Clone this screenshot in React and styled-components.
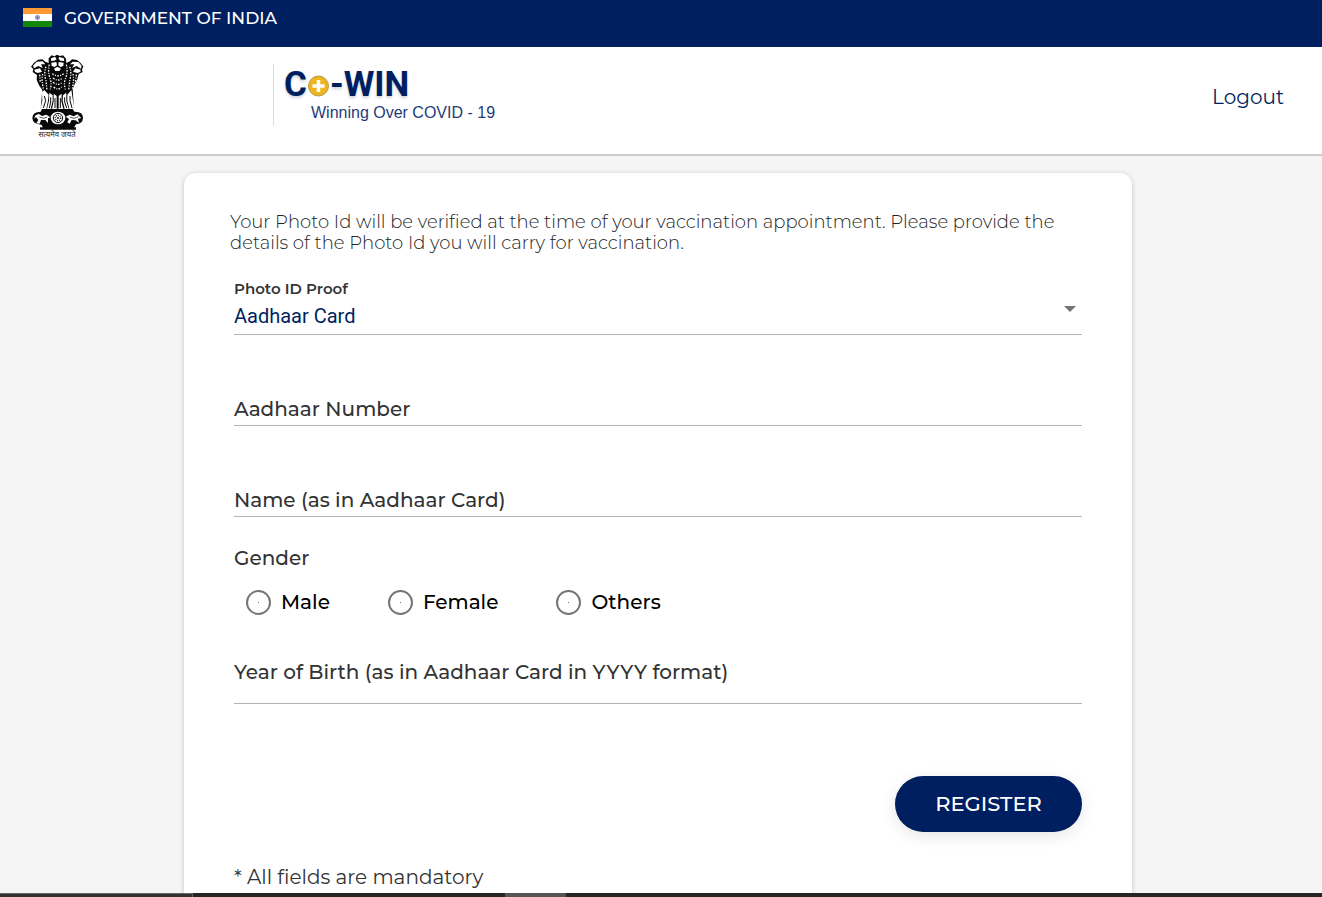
import React from 'react';
import styled, { createGlobalStyle, ThemeProvider } from 'styled-components';

const theme = {
  navy: '#001f60',
  tagline: '#263a78',
  page: '#f5f5f5',
  text: '#333',
  line: '#b4b4b4',
  gray: '#757575',
  font: "Montserrat, Inter, sans-serif"
};

const genders = ['Male', 'Female', 'Others'];
const idProofs = ['Aadhaar Card', 'Driving License', 'PAN Card', 'Passport'];

const GlobalStyle = createGlobalStyle`
  * {
    box-sizing: border-box;
  }

  body {
    margin: 0;
    background: ${theme.page};
    font-family: ${theme.font};
    color: ${theme.text};
  }
`;

const TopBar = styled.div`
  display: flex;
  align-items: flex-start;
  gap: 12px;
  height: 47px;
  padding: 8px 23px;
  background: ${props => props.theme.navy};
  color: #fff;
  font-size: 17px;
  font-weight: 500;
  line-height: 20px;
`;

const Header = styled.header`
  display: flex;
  align-items: center;
  justify-content: space-between;
  height: 109px;
  padding: 0 38px 8px 30px;
  background: #fff;
  border-bottom: 2px solid #ccc;
`;

const Brand = styled.div`
  display: flex;
  align-items: flex-start;
  gap: 188px;
`;

const CowinLogo = styled.div`
  display: flex;
  flex-direction: column;
  margin-top: 10px;
  padding: 2px 0 0 10px;
  height: 62px;
  border-left: 1px solid #ddd;
`;

const CowinName = styled.div`
  display: flex;
  align-items: center;
  height: 38px;
  color: ${props => props.theme.navy};
  font: 700 35px/38px Roboto, sans-serif;
  text-shadow: 0 2px 3px rgba(0, 31, 96, 0.2);
`;

const Tagline = styled.div`
  padding-left: 27px;
  color: ${props => props.theme.tagline};
  font: 16px/18px 'Liberation Sans', Arial, sans-serif;
`;

const LogoutLink = styled.a`
  color: ${props => props.theme.navy};
  font-size: 20px;
  line-height: 24px;
  text-decoration: none;
`;

const Page = styled.main`
  padding: 17px 6px 24px 0;
`;

const Card = styled.section`
  max-width: 948px;
  margin: 0 auto;
  padding: 39px 46px 48px;
  background: #fff;
  border-radius: 12px;
  box-shadow: 0 1px 5px rgba(0, 0, 0, 0.2);
`;

const Intro = styled.p`
  margin: 0;
  color: #222;
  font-size: 18px;
  font-weight: 300;
  line-height: 21px;
`;

const Form = styled.form`
  display: flex;
  flex-direction: column;
  padding: 23px 4px 0;
`;

const SelectField = styled.div`
  display: grid;
  border-bottom: 1px solid ${props => props.theme.line};
`;

const SmallLabel = styled.label`
  font-size: 15px;
  font-weight: 600;
  line-height: 24px;
`;

const SelectBox = styled.div`
  display: grid;
  align-items: center;

  > * {
    grid-area: 1 / 1;
  }

  svg {
    justify-self: end;
    align-self: start;
    margin: 5px 6px;
    pointer-events: none;
  }
`;

const Select = styled.select`
  width: 100%;
  height: 33px;
  padding: 0 0 3px;
  border: 0;
  outline: 0;
  appearance: none;
  background: transparent;
  color: ${props => props.theme.navy};
  font: 20px/30px Roboto, sans-serif;
`;

const Field = styled.div`
  display: grid;
  align-items: start;
  margin-top: ${props => props.$gap}px;
  border-bottom: 1px solid ${props => props.theme.line};

  > * {
    grid-area: 1 / 1;
  }
`;

const FieldLabel = styled.label`
  font-size: 20px;
  font-weight: 500;
  line-height: 24px;
  pointer-events: none;
`;

const Input = styled.input`
  width: 100%;
  height: ${props => (props.$tall ? 43 : 28)}px;
  padding: 0;
  border: 0;
  outline: 0;
  background: transparent;
  color: ${props => props.theme.navy};
  font: 20px/24px Roboto, sans-serif;
`;

const Fieldset = styled.fieldset`
  margin: 29px 0 0;
  padding: 0;
  border: 0;
  min-width: 0;
`;

const Legend = styled.legend`
  padding: 0;
  font-size: 20px;
  font-weight: 500;
  line-height: 24px;
`;

const Options = styled.div`
  display: flex;
  gap: 58px;
  padding: 20px 12px 0;
`;

const Option = styled.label`
  display: flex;
  align-items: flex-start;
  gap: 10px;
  color: #000;
  font-size: 20px;
  font-weight: 500;
  line-height: 24px;
`;

const Radio = styled.input`
  display: grid;
  place-items: center;
  width: 25px;
  height: 25px;
  margin: 0;
  appearance: none;
  border: 2px solid ${props => props.theme.gray};
  border-radius: 50%;

  &::before {
    content: '';
    width: 1px;
    height: 1px;
    background: ${props => props.theme.gray};
  }

  &:checked::before {
    width: 13px;
    height: 13px;
    border-radius: 50%;
    background: ${props => props.theme.navy};
  }
`;

const RegisterButton = styled.button`
  align-self: flex-end;
  min-width: 187px;
  height: 56px;
  margin-top: 72px;
  border: 0;
  border-radius: 28px;
  background: ${props => props.theme.navy};
  box-shadow: 0 4px 16px rgba(0, 0, 0, 0.1);
  color: #fff;
  font: 500 21px/24px ${props => props.theme.font};
`;

const Note = styled.p`
  margin: 33px 0 0;
  font-size: 20px;
  line-height: 24px;
`;

const Taskbar = styled.div`
  position: fixed;
  right: 0;
  bottom: 0;
  left: 0;
  display: flex;
  height: 4px;
  background: #272526;
`;

const TaskbarSearch = styled.div`
  width: 193px;
  background: #323030;
  border-top: 1px solid #666;
  border-right: 1px solid #666;
`;

const TaskbarActive = styled.div`
  width: 61px;
  margin-left: 312px;
  background: #555;
`;

const Flag = () => (
  <svg width="29" height="19" viewBox="0 0 29 19" aria-hidden="true">
    <rect width="29" height="19" fill="#fff" />
    <rect width="29" height="6" fill="#ff9933" />
    <rect y="13" width="29" height="6" fill="#138808" />
    <circle cx="14.500" cy="9.500" r="2.200" fill="#a9add6" stroke="#8a8dc4" strokeWidth="0.800" />
    <circle cx="14.500" cy="9.500" r="0.900" fill="#4b50a0" />
  </svg>
);

const Emblem = () => (
  <svg width="55" height="85" viewBox="30 18 165 255" role="img" aria-label="State Emblem of India">
    <g fill="#080808">
      <path d="M86 31L95 22L103 25L111 20L120 24L129 22L138 32L139 45L150 40L156 34L171 36L181 44L190 55L186 65L188 72L176 78L172 94L164 108L158 124L162 182H62L67 126L57 112L50 96L51 81L38 72L40 63L33 56L42 44L54 35L67 34L76 41L86 45Z" />
      <path d="M66 183H158L163 191Q189 190 189 210Q188 228 168 229L161 240H70L64 230Q38 228 37 210Q38 191 62 191Z" />
      <path d="M60 238H168V245H60Z" />
    </g>
    <g fill="#fff">
      <path d="M93 31L105 26L110 34L103 38L93 39ZM117 27L131 30L133 39L121 38L116 33Z" />
      <path d="M94 44L109 42L111 52L104 57L95 54ZM116 42L131 44L130 54L121 57L115 52Z" />
      <path d="M102 62L112 56L123 62L118 69L106 69Z" />
      <path d="M39 53L50 41L68 40L76 49L63 49L68 60L55 54L42 61ZM185 53L175 42L158 41L150 49L163 49L156 60L170 54L183 62Z" />
      <path d="M43 65L60 61L66 71L54 75L45 72ZM182 65L166 61L159 71L172 75L181 72Z" />
      <path d="M66 132L73 126L86 140L84 158L79 183H61L67 158Z" />
      <path d="M88 134L98 142L98 158L92 183H81L87 158Z" />
      <path d="M101 137L110 144L110 183H96L101 160Z" />
      <path d="M116 144L125 137L124 160L130 183H116Z" />
      <path d="M129 142L139 134L139 158L146 183H134L128 158Z" />
      <path d="M142 140L154 126L159 158L164 183H148L142 158Z" />
      <ellipse cx="114" cy="210" rx="22" ry="19" />
      <path d="M43 212Q44 199 57 198L66 204L79 200L91 208L84 211L84 225L76 216L63 216L59 227L49 226L55 216L48 207ZM137 206L149 200L161 205L172 199L184 210L174 212L177 225L167 217L155 216L149 227L142 223L147 213Z" />
    </g>
    <g fill="none" stroke="#fff" strokeWidth="4" strokeDasharray="5 4 3 4">
      <path d="M88 50Q83 68 89 88Q96 104 91 124M139 50Q144 68 138 88Q130 104 136 124" />
      <path d="M78 56Q71 74 78 98L81 126M149 56Q156 74 149 98L146 126" />
      <path d="M68 78Q64 94 70 122M159 78Q163 94 157 122M59 80L61 104M169 80L166 104" />
      <path d="M97 77Q114 90 131 77M99 90Q114 102 128 90M99 103Q114 115 127 103M101 117Q114 129 125 117" />
    </g>
    <g fill="none" stroke="#080808" strokeWidth="3">
      <path d="M73 144L77 158L70 180M92 148L92 162L88 180M105 150V180M121 150V180M134 148L134 162L140 180M150 144L150 158L156 180" />
      <path d="M58 207L71 211L81 207M149 207L162 211L175 206" strokeWidth="2" />
    </g>
    <circle cx="114" cy="210" r="14" fill="none" stroke="#080808" strokeWidth="3" />
    <circle cx="114" cy="210" r="8" fill="none" stroke="#080808" strokeWidth="4" strokeDasharray="3 3" />
    <circle cx="114" cy="210" r="3" fill="#080808" />
    <text x="111" y="268" textAnchor="middle" fontSize="23" fill="#222" fontFamily="'Noto Sans Devanagari', 'Noto Sans', sans-serif">सत्यमेव जयते</text>
  </svg>
);

const PlusCoin = () => (
  <svg width="23" height="24" viewBox="0 0 23 24" role="img" aria-label="o">
    <circle cx="11.500" cy="13" r="10" fill="#efb51c" stroke="#b99a4d" />
    <path d="M11.500 7V19M5.500 13H17.500" stroke="#fff" strokeWidth="3.500" />
  </svg>
);

class App extends React.Component {

  constructor(props) {
    super(props);

    this.state = {
      gender: ''
    }

    this.selectGender = this.selectGender.bind(this);
    this._renderGender = this._renderGender.bind(this);
  }

  selectGender(e) {
    this.setState({gender: e.target.value})
  }

  _renderGender() {
    return (
      <Fieldset>
        <Legend>Gender</Legend>
        <Options>
          {genders.map(name => (
            <Option key={name}>
              <Radio type="radio" name="gender" value={name} checked={this.state.gender === name} onChange={this.selectGender} />
              {name}
            </Option>
          ))}
        </Options>
      </Fieldset>
    );
  }

  render() {
    return (
      <ThemeProvider theme={theme}>
        <GlobalStyle />
        <TopBar>
          <Flag />
          GOVERNMENT OF INDIA
        </TopBar>
        <Header>
          <Brand>
            <Emblem />
            <CowinLogo>
              <CowinName>C<PlusCoin />-WIN</CowinName>
              <Tagline>Winning Over COVID - 19</Tagline>
            </CowinLogo>
          </Brand>
          <LogoutLink href="#logout">Logout</LogoutLink>
        </Header>
        <Page>
          <Card>
            <Intro>
              Your Photo Id will be verified at the time of your vaccination appointment. Please provide the details of the Photo Id you will carry for vaccination.
            </Intro>
            <Form onSubmit={e => e.preventDefault()}>
              <SelectField>
                <SmallLabel htmlFor="id-proof">Photo ID Proof</SmallLabel>
                <SelectBox>
                  <Select id="id-proof" defaultValue="Aadhaar Card">
                    {idProofs.map(proof => <option key={proof}>{proof}</option>)}
                  </Select>
                  <svg width="12" height="6" viewBox="0 0 12 6" aria-hidden="true">
                    <path d="M0 0H12L6 6Z" fill={theme.gray} />
                  </svg>
                </SelectBox>
              </SelectField>
              <Field $gap={62}>
                <Input id="id-number" type="text" />
                <FieldLabel htmlFor="id-number">Aadhaar Number</FieldLabel>
              </Field>
              <Field $gap={62}>
                <Input id="full-name" type="text" />
                <FieldLabel htmlFor="full-name">Name (as in Aadhaar Card)</FieldLabel>
              </Field>
              {this._renderGender()}
              <Field $gap={45}>
                <Input id="birth-year" type="text" inputMode="numeric" $tall />
                <FieldLabel htmlFor="birth-year">Year of Birth (as in Aadhaar Card in YYYY format)</FieldLabel>
              </Field>
              <RegisterButton type="submit">REGISTER</RegisterButton>
              <Note>* All fields are mandatory</Note>
            </Form>
          </Card>
        </Page>
        <Taskbar>
          <TaskbarSearch />
          <TaskbarActive />
        </Taskbar>
      </ThemeProvider>
    );
  }
}

export default App;
